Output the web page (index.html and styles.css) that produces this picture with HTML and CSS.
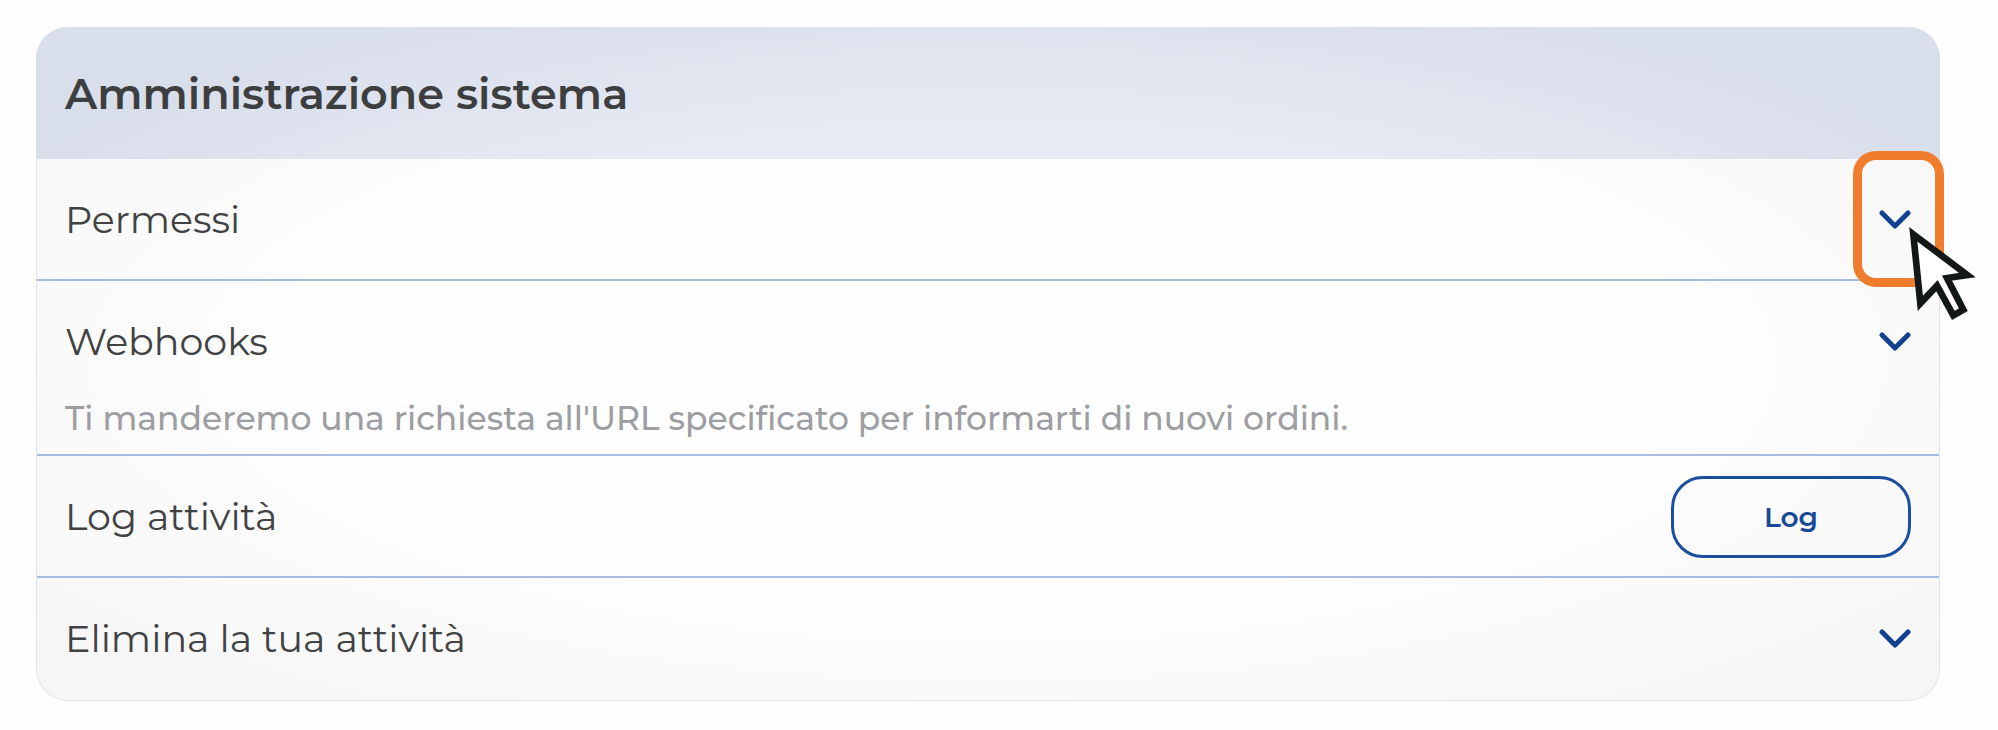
FILE: index.html
```
<!DOCTYPE html>
<html lang="it">

<head>
  <meta charset="utf-8" />
  <meta name="viewport" content="width=device-width, initial-scale=1" />

  <title>Amministrazione sistema</title>

  <link rel="stylesheet" href="styles.css">
</head>

<body>
  <section class="card">
    <header class="card-header">
      <h1>Amministrazione sistema</h1>
    </header>

    <div class="row">
      <h2>Permessi</h2>
      <div class="toggle-wrap">
        <button class="toggle" type="button" aria-label="Apri Permessi">
          <svg viewBox="0 0 32 20"><path d="M3 3l13 13L29 3" /></svg>
        </button>
        <span class="highlight"></span>
        <svg class="cursor" viewBox="0 0 210 285">
          <path d="M16 25L178 147L117 156L166 251L136 268L87 179L37 232Z" />
        </svg>
      </div>
    </div>

    <div class="row row-detail">
      <h2>Webhooks</h2>
      <button class="toggle" type="button" aria-label="Apri Webhooks">
        <svg viewBox="0 0 32 20"><path d="M3 3l13 13L29 3" /></svg>
      </button>
      <p>Ti manderemo una richiesta all'URL specificato per informarti di nuovi ordini.</p>
    </div>

    <div class="row">
      <h2>Log attività</h2>
      <button class="log-button" type="button">Log</button>
    </div>

    <div class="row">
      <h2>Elimina la tua attività</h2>
      <button class="toggle" type="button" aria-label="Apri Elimina la tua attività">
        <svg viewBox="0 0 32 20"><path d="M3 3l13 13L29 3" /></svg>
      </button>
    </div>
  </section>
</body>

</html>
```

FILE: styles.css
```
* {
  box-sizing: border-box;
}

body {
  margin: 0;
  padding: 27px 58px 29px 36px;
  background-color: #fefefe;
  font-family: Montserrat, Inter, sans-serif;
  color: #414244;
}

h1,
h2,
p {
  margin: 0;
}

.card {
  border: 1px solid #e2e2ea;
  border-top: 0;
  border-radius: 32px;
  background: radial-gradient(ellipse at center, #fefefe 48%, #f6f6f6 92%);
}

.card-header {
  display: flex;
  align-items: center;
  min-height: 132px;
  margin: 0 -1px;
  padding: 2px 29px 0;
  border-radius: 32px 32px 0 0;
  background: radial-gradient(ellipse 60% 300% at 50% 255%, #e6eaf5 60%, #d8deea 100%);
}

h1 {
  font-size: 43px;
  font-weight: 600;
  line-height: 56px;
  color: #3d3e40;
}

h2 {
  font-size: 38px;
  font-weight: 400;
  line-height: 48px;
}

.row {
  display: flex;
  flex-wrap: wrap;
  align-items: center;
  justify-content: space-between;
  min-height: 122px;
  padding: 18px 28px 16px;
  border-bottom: 2px solid #a8bce0;
}

.row:last-child {
  padding: 16px 28px;
  border-bottom: 0;
}

.row-detail {
  padding: 37px 28px 13px;
}

.row-detail p {
  width: 100%;
  margin-top: 30px;
  font-size: 33px;
  font-weight: 500;
  line-height: 45px;
  color: #9d9ea2;
}

.toggle {
  display: flex;
  padding: 0;
  border: 0;
  background: none;
  cursor: pointer;
}

.toggle svg {
  width: 32px;
  height: 20px;
  fill: none;
  stroke: #12418f;
  stroke-width: 5;
  stroke-linecap: round;
  stroke-linejoin: round;
}

.toggle-wrap {
  position: relative;
}

/* frame and pointer drawn over the first toggle */
.highlight {
  position: absolute;
  top: -59px;
  left: -26px;
  width: 91px;
  height: 136px;
  border: 9px solid #f07d2d;
  border-radius: 23px;
  pointer-events: none;
}

.cursor {
  position: absolute;
  top: 16px;
  left: 29px;
  width: 70px;
  height: 95px;
  overflow: visible;
  fill: #fff;
  stroke: #141718;
  stroke-width: 20;
  pointer-events: none;
}

.log-button {
  width: 240px;
  height: 82px;
  border: 3px solid #1a4fa0;
  border-radius: 32px;
  background: none;
  font-family: inherit;
  font-size: 28px;
  font-weight: 600;
  color: #174a98;
  cursor: pointer;
}
```
